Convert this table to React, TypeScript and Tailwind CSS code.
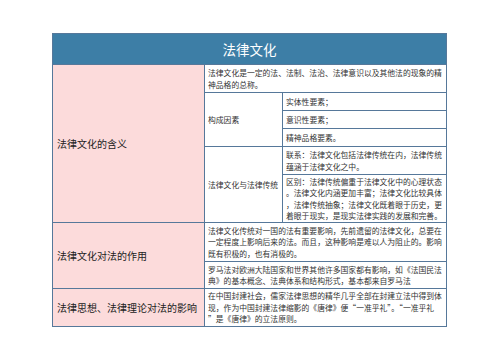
import React from 'react';

const line = 'border-[#56789a]';

function Cell({ lines, className = '' }: { lines: string[]; className?: string }) {
  return (
    <div className={`flex flex-col justify-center px-[3px] text-[7.8px] leading-[11.4px] text-[#333] whitespace-nowrap ${className}`}>
      {lines.map((l, i) => (
        <span key={i}>{l}</span>
      ))}
    </div>
  );
}

function LeftLabel({ text }: { text: string }) {
  return (
    <div className="w-[151px] shrink-0 bg-[#fcdbdb] flex items-center px-[4px] text-[10px] text-[#222]">
      {text}
    </div>
  );
}

export default function App() {
  return (
    <div
      className="w-[500px] h-[360px] bg-white pt-[33px] pl-[52px]"
      style={{ fontFamily: '"Noto Sans CJK SC", "Noto Sans", sans-serif' }}
    >
      <div className={`w-[395px] border ${line}`}>
        <div className="h-[30px] bg-[#3d7ea6] flex items-center justify-center text-white text-[13.5px]">
          法律文化
        </div>

        {/* 法律文化的含义 */}
        <div className={`h-[158px] border-t ${line} flex`}>
          <LeftLabel text="法律文化的含义" />
          <div className={`flex-1 border-l ${line} flex flex-col`}>
            <Cell
              className="h-[27px]"
              lines={['法律文化是一定的法、法制、法治、法律意识以及其他法的现象的精', '神品格的总称。']}
            />
            <div className={`h-[54px] border-t ${line} flex`}>
              <Cell className="w-[77px]" lines={['构成因素']} />
              <div className={`flex-1 border-l ${line} flex flex-col`}>
                <Cell className="h-[17px]" lines={['实体性要素；']} />
                <Cell className={`h-[18px] border-t ${line}`} lines={['意识性要素；']} />
                <Cell className={`h-[18px] border-t ${line}`} lines={['精神品格要素。']} />
              </div>
            </div>
            <div className={`h-[76px] border-t ${line} flex`}>
              <Cell className="w-[77px]" lines={['法律文化与法律传统']} />
              <div className={`flex-1 border-l ${line} flex flex-col`}>
                <Cell
                  className="h-[27px]"
                  lines={['联系：法律文化包括法律传统在内，法律传统', '蕴涵于法律文化之中。']}
                />
                <Cell
                  className={`h-[48px] border-t ${line}`}
                  lines={[
                    '区别：法律传统偏重于法律文化中的心理状态',
                    '。法律文化内涵更加丰富；法律文化比较具体',
                    '，法律传统抽象；法律文化既着眼于历史，更',
                    '着眼于现实，是现实法律实践的发展和完善。',
                  ]}
                />
              </div>
            </div>
          </div>
        </div>

        {/* 法律文化对法的作用 */}
        <div className={`h-[66px] border-t ${line} flex`}>
          <LeftLabel text="法律文化对法的作用" />
          <div className={`flex-1 border-l ${line} flex flex-col`}>
            <Cell
              className="h-[38px]"
              lines={[
                '法律文化传统对一国的法有重要影响，先前遗留的法律文化，总要在',
                '一定程度上影响后来的法。而且，这种影响是难以人为阻止的。影响',
                '既有积极的，也有消极的。',
              ]}
            />
            <Cell
              className={`h-[27px] border-t ${line}`}
              lines={[
                '罗马法对欧洲大陆国家和世界其他许多国家都有影响，如《法国民法',
                '典》的基本概念、法典体系和结构形式，基本都来自罗马法',
              ]}
            />
          </div>
        </div>

        {/* 法律思想、法律理论对法的影响 */}
        <div className={`h-[38px] border-t ${line} flex`}>
          <LeftLabel text="法律思想、法律理论对法的影响" />
          <div className={`flex-1 border-l ${line} flex flex-col`}>
            <Cell
              className="h-[37px]"
              lines={[
                '在中国封建社会，儒家法律思想的精华几乎全部在封建立法中得到体',
                '现，作为中国封建法律缩影的《唐律》便“一准乎礼”。“一准乎礼',
                '”是《唐律》的立法原则。',
              ]}
            />
          </div>
        </div>
      </div>
    </div>
  );
}
